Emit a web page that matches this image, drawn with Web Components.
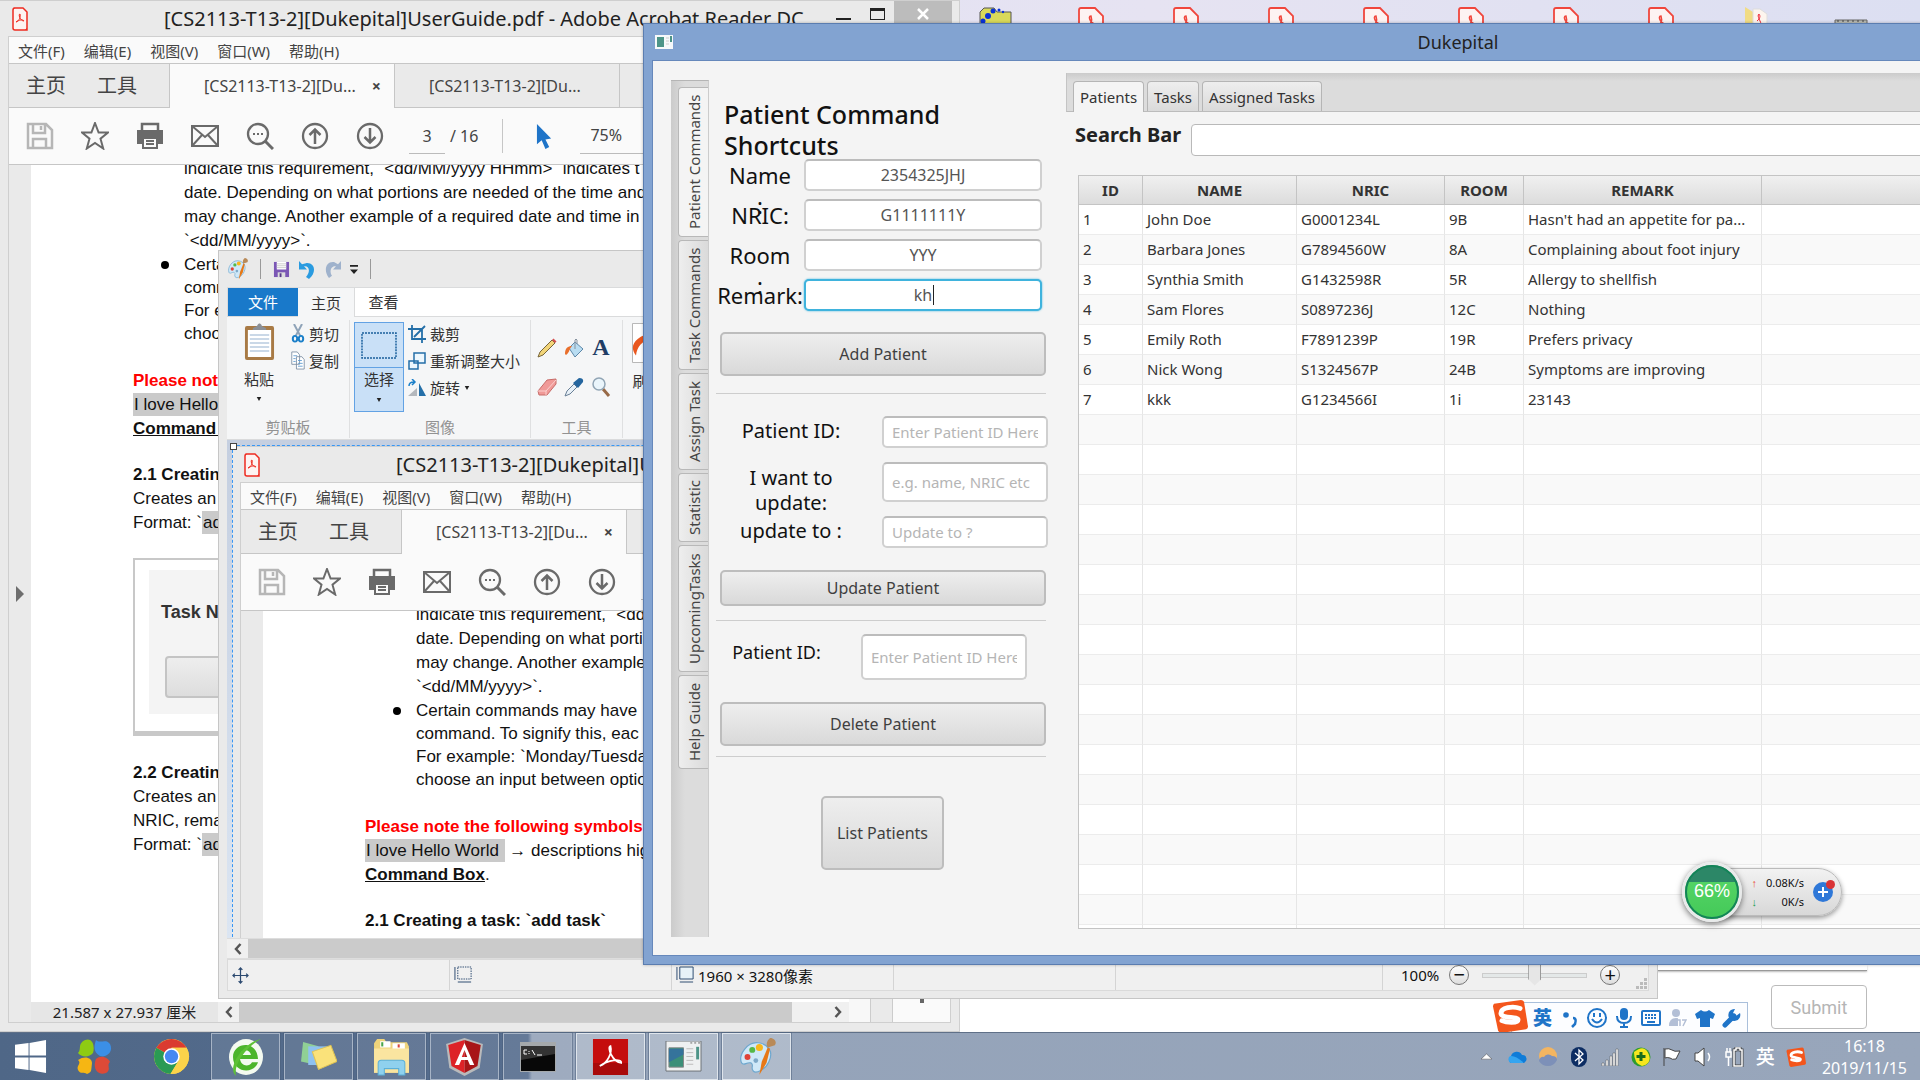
<!DOCTYPE html>
<html lang="zh-CN">
<head>
<meta charset="utf-8">
<title>Dukepital</title>
<style>
html,body{margin:0;height:100%;overflow:hidden}
body{font-family:"Noto Sans","Noto Sans CJK SC",sans-serif;color:#333}
</style>
</head>
<body>
<desk-top></desk-top>
<script>
const ICONS = {
pdf:['0 0 16 24','<path d="M1.500 1h9.500L15 5v18H3q-2 0-2-2V3q0-2 2-2M15 5v16q0 2-2 2H3" fill="#fdf3f2" stroke="#ee2b20" stroke-width="1.500"/><path d="M4 15c3-1 5-5 4-8-2 0 0 7 4 7-1-2-5-1-8 1" fill="none" stroke="#ee2b20"/>'],
save:['0 0 28 28','<path d="M2 2h18l6 6v18H2zM7 2v9h12V2M15 4v4M7 26v-9h13v9" fill="none" stroke="#b6b6b6" stroke-width="2.500"/>'],
star:['0 0 28 28','<path d="M14 1l3.600 9.500H27l-7.500 6.200 2.700 9.800L14 21l-8.200 5.500 2.700-9.800L1 10.500h9.400z" fill="none" stroke="#6a6a6a" stroke-width="2"/>'],
print:['0 0 28 28','<path d="M6 10V2h16v8" fill="none" stroke="#6a6a6a" stroke-width="2.500"/><path d="M1 8h26v14h-5v-6H6v6H1z" fill="#6a6a6a"/><path d="M7 16h14v10H7zM10 19h8M10 22h8" fill="none" stroke="#6a6a6a" stroke-width="2"/>'],
mail:['0 0 28 28','<path d="M1 4h26v20H1zM1 4l13 11L27 4M1 24l10-11M27 24L17 13" fill="none" stroke="#6a6a6a" stroke-width="2"/>'],
find:['0 0 28 28','<circle cx="12" cy="12" r="10" fill="none" stroke="#6a6a6a" stroke-width="2.300"/><path d="M19 19l8 8" stroke="#6a6a6a" stroke-width="3"/><path d="M7 11h2v2H7zm4 0h2v2h-2zm4 0h2v2h-2z" fill="#6a6a6a"/>'],
up:['0 0 28 28','<circle cx="14" cy="14" r="12" fill="none" stroke="#6a6a6a" stroke-width="2.300"/><path d="M14 22V8M8.500 13L14 7.500l5.500 5.500" fill="none" stroke="#6a6a6a" stroke-width="2.500"/>'],
down:['0 0 28 28','<circle cx="14" cy="14" r="12" fill="none" stroke="#6a6a6a" stroke-width="2.300"/><path d="M14 6v14M8.500 15l5.500 5.500 5.500-5.500" fill="none" stroke="#6a6a6a" stroke-width="2.500"/>'],
cursor:['0 0 18 28','<path d="M1 1v21l5-4 4 9 4-2-4-8 6-1z" fill="#1f74c8"/>'],
palette:['0 0 32 32','<path d="M17 4c9 1 13 8 9 16-3 7-11 10-13 8-3-3 1-5-2-7-4-1-6 3-8 0C0 14 8 3 17 4z" fill="#cfe8f8" stroke="#6fa8cf"/><circle cx="8" cy="16" r="2.500" fill="#df4238"/><circle cx="12" cy="10" r="2.500" fill="#55b848"/><circle cx="18" cy="8" r="3" fill="#f9b61c"/><circle cx="15" cy="19" r="2" fill="#7ea9c9"/><path d="M18 31l2-11 5-12 2 1-3 12z" fill="#e67817"/><path d="M25 8c-2-4 0-6 2-8 4 0 6 4 4 6z" fill="#b98a58"/>'],
floppy:['0 0 18 18','<path d="M1 1h16v16H1z" fill="#7b57b5"/><path d="M4 1h10v8H4z" fill="#fff"/><path d="M4 3h10M4 5h10M4 7h10" stroke="#ccc"/><path d="M5 12h8v5H5z" fill="#ddd"/><path d="M7 13h2v4H7z" fill="#553a86"/>'],
undo:['0 0 18 18','<path d="M1 1v8h8L6 6c5-1 7 5 2 10l3 2c8-6 6-16-3-15L4 4z" fill="#2a9be0"/>'],
redo:['0 0 18 18','<path d="M17 1v8H9l3-3C7 5 5 11 8 15l-3 2C-1 10 2 1 10 2l4 2z" fill="#9fb2cc"/>'],
caret:['0 0 8 4','<path d="M1 0h6L4 4z" fill="#222"/>'],
lt:['0 0 8 12','<path d="M6.500 1L2 6l4.500 5" fill="none" stroke="#555" stroke-width="2.500"/>'],
gt:['0 0 8 12','<path d="M1.500 1L6 6l-4.500 5" fill="none" stroke="#555" stroke-width="2.500"/>'],
close:['0 0 12 12','<path d="M1 1l10 10M11 1L1 11" fill="none" stroke="#fff" stroke-width="2.500"/>'],
more:['0 0 8 10','<path d="M0 0h8v2H0zM0 5h8L4 10z" fill="#222"/>'],
clip:['0 0 32 38','<rect x="1" y="3" width="30" height="34" rx="2" fill="#a87a45"/><path d="M4 7h24v27H4z" fill="#fff"/><path d="M6 12h20M6 16h20M6 20h20M6 24h20M6 28h20" stroke="#b9cbe0" stroke-width="1.500"/><path d="M9 7c0-4 4-2 5-5 1-2 3-2 4 0 1 3 5 1 5 5z" fill="#8a8f96"/>'],
cut:['0 0 14 20','<path d="M3 0l6 12M11 0L5 12" stroke="#8fa3b8" stroke-width="2"/><ellipse cx="4" cy="15.500" rx="2.200" ry="3" fill="none" stroke="#1b7fc9" stroke-width="2"/><ellipse cx="10" cy="15.500" rx="2.200" ry="3" fill="none" stroke="#1b7fc9" stroke-width="2"/>'],
copy:['0 0 18 20','<path d="M1 1h7l3 3v10H1zM7 6h7l3 3v10H7z" fill="#fff" stroke="#7d8ea3"/><path d="M3 5h5M3 8h3M3 11h3M9 10h5M9 13h6M9 16h6" stroke="#5d9ad0"/>'],
marquee:['0 0 36 28','<rect x="1" y="1" width="34" height="26" fill="none" stroke="#1a5f9c" stroke-width="1.500" stroke-dasharray="2 1"/>'],
crop:['0 0 18 18','<path d="M4 0v14h14M0 4h14v14M6 12L17 1" fill="none" stroke="#246fa8" stroke-width="1.800"/>'],
resize:['0 0 18 18','<path d="M1 9h9v8H1zM6 1h11v10H6z" fill="#edf7fd" stroke="#246fa8" stroke-width="1.500"/>'],
rotate:['0 0 18 18','<path d="M0 17h9V9z" fill="#b4b8bd"/><path d="M11 4v13h7z" fill="#246fa8"/><path d="M1 7c0-3 2-4 5-4M4 0l3 3-3 3" fill="none" stroke="#1b7fc9" stroke-width="1.500"/>'],
pencil:['0 0 20 20','<path d="M1 19l2-5L15 2l3 3L6 17z" fill="#f2d579" stroke="#77653a"/><path d="M15 2l3 3 1.500-1.500-3-3z" fill="#d45050"/>'],
bucket:['0 0 20 20','<path d="M5 10l6-6 8 7-8 8z" fill="#b9ddf2" stroke="#5d87a8"/><path d="M11 11V2q1-2 2 0v4" fill="none" stroke="#8793a0"/><path d="M1 16c0-6 3-8 7-8-3 3-2 6-6 9z" fill="#e96f2c"/>'],
eraser:['0 0 20 20','<path d="M1 14L10 3l9-1v5L10 18H2z" fill="#f09a98" stroke="#c76c69"/><path d="M1 14h8L19 3M9 14v4" fill="none" stroke="#fbd0ce"/>'],
picker:['0 0 20 20','<path d="M1 19l2-5 7-7 3 3-7 7z" fill="#e8f0f7" stroke="#687f96"/><path d="M9 6l5 5 5-6q1-4-4-4z" fill="#24659e"/>'],
glass:['0 0 20 20','<path d="M12 12l6 7" stroke="#986a47" stroke-width="3"/><circle cx="8" cy="7" r="6" fill="#eaf5fb" stroke="#91a5b5" stroke-width="1.500"/>'],
brush:['0 0 30 42','<path d="M.5.5h29v41H.5z" fill="#fff" stroke="#b5b5b5"/><path d="M20 10C4 14-4 24 4 34c1-9 6-16 16-17z" fill="#e9571f"/>'],
move:['0 0 18 18','<path d="M9 1v16M1 9h16M7 3l2-2 2 2M7 15l2 2 2-2M3 7L1 9l2 2M15 7l2 2-2 2" fill="none" stroke="#2c4a70" stroke-width="1.300"/>'],
selsize:['0 0 20 18','<path d="M4 1h14v12H4z" fill="none" stroke="#2c4a70" stroke-dasharray="1.500 1"/><path d="M1 1v13M4 16h14" stroke="#2c4a70"/>'],
imgsize:['0 0 20 18','<path d="M4 1h14v12H4z" fill="#e7f2f8" stroke="#2c4a70"/><path d="M1 1v13M4 16h14" stroke="#2c4a70"/>'],
win:['0 0 18 16','<path d="M0 1h18v14H0z" fill="#f6f8fa"/><path d="M2 3h7v10H2z" fill="#4d9488"/><path d="M15 2h2v6h-2z" fill="#4d9488"/><path d="M11 4h3M11 7h3M11 10h3" stroke="#ccc"/>'],
start:['0 0 34 34','<path d="M1 5l14-2v13H1zM16 3l17-3v16H16zM1 18h14v13L1 29zM16 18h17v16l-17-3z" fill="#fff"/>'],
four:['0 0 36 36','<path d="M9 1c8-3 10 7 8 13-4 5-12 4-15 0 4-4-1-9 7-13z" fill="#8ecb13"/><path d="M20 1c4 4 10-2 14 4 4 8-4 14-10 12-7-4-6-10-4-16z" fill="#3b8fe6"/><path d="M2 21c7-5 14-2 14 3-1 8 0 9-5 11-5-3-6 1-9-4-2-5 4-6 0-10z" fill="#f6b613"/><path d="M20 20c5-5 13-1 14 3-4 4 2 7-4 11-8 3-14-4-10-14z" fill="#dd4a37"/>'],
chrome:['0 0 36 36','<circle cx="18" cy="18" r="17" fill="#fbd34a"/><path d="M18 18L3.300 9.500A17 17 0 0 1 32.700 9.500H18z" fill="#da3b30"/><path d="M3.300 9.500A17 17 0 0 0 17 35l8-13-7-4z" fill="#2a9a54"/><path d="M18 9.500h14.700A17 17 0 0 1 17 35l8-13z" fill="#fbd34a"/><circle cx="18" cy="18" r="8" fill="#fff"/><circle cx="18" cy="18" r="6.500" fill="#4688f1"/>'],
e360:['0 0 36 36','<circle cx="18" cy="18" r="17" fill="#f4faf0"/><path d="M30 20H12c1 7 9 8 12 3h6C26 35 5 33 5 18 5 4 29 1 30 20zM12 16h11c-1-6-10-6-11 0z" fill="#4cb52b"/><path d="M8 36C-2 28 16 4 33 1 20 7 5 24 8 36z" fill="#5dc135"/>'],
notes:['0 0 36 36','<path d="M3 1l15 5-6 20-11-3z" fill="#90d095"/><path d="M8 6h18v21H8z" fill="#8fc2ef"/><path d="M12 12l18-7 6 18-18 9z" fill="#fae27a" stroke="#dfc353"/>'],
folder:['0 0 38 36','<path d="M2 5l3-4h7l2 3h20l2 4v25H2z" fill="#eed37b"/><path d="M8 3h10v6H8zM20 5h12v6H20z" fill="#fff"/><path d="M9 4h2v4H9z" fill="#4aa54a"/><path d="M25 6h2v3h-2z" fill="#d9453a"/><path d="M2 10h34v23H2z" fill="#fae5a0"/><path d="M6 24q0-3 3-3h20q3 0 3 3v11h-6v-6H12v6H6z" fill="#8fd1ee" stroke="#5bb0d9"/>'],
ang:['0 0 36 38','<path d="M18 0l17 6-3 24-14 8L4 30 1 6z" fill="#b9babb"/><path d="M18 2l15 5-3 21-12 7z" fill="#a81517"/><path d="M18 2L3 7l3 21 12 7z" fill="#dd2227"/><path d="M18 5l9 22h-4l-2-5h-6l-2 5H9zM18 12l-2.500 7h5z" fill="#fff" fill-rule="evenodd"/>'],
cmd:['0 0 36 30','<path d="M0 0h36v30H0z" fill="#a5a9ac"/><path d="M1 4h34v25H1z" fill="#080808"/><path d="M1 4h34v8L1 18z" fill="#333"/><path d="M7 8H4v4h3M9 9v1M9 11v1M12 8l3 5M17 13h5" stroke="#fff" fill="none"/>'],
reader:['0 0 38 36','<path d="M1 0h36v36H1z" fill="#c50d0d"/><path d="M1 24h36v12H1z" fill="#8e0808" opacity=".5"/><path d="M8 27c8-3 13-13 11-20-4 1 2 16 11 17 1-5-14-3-22 3" fill="none" stroke="#fff" stroke-width="1.700"/>'],
app:['0 0 38 32','<path d="M1 0h36v31H1z" fill="#eef0f1" stroke="#6c7277"/><path d="M4 7h15v20H4z" fill="#3b8f78" stroke="#888"/><path d="M4 8h15v6L4 22z" fill="#35739b"/><path d="M22 8h7M22 12h7M22 16h7M22 20h7M22 24h7" stroke="#bbb"/><path d="M32 6h3v13h-3z" fill="#4d9488"/><path d="M26 2h2m2 0h2m2 0h2" stroke="#666"/>'],
tri:['0 0 12 8','<path d="M0 7l6-6 6 6z" fill="#fff" stroke="#555" stroke-width=".6"/>'],
cloud:['0 0 20 14','<path d="M4 13a4 4 0 0 1 0-7 6 6 0 0 1 11-1 4 4 0 0 1 1 8z" fill="#0f7cd8"/><path d="M4 13a4 4 0 0 1-1-7q5-1 13 6v1z" fill="#35a5f0"/>'],
weather:['0 0 20 20','<circle cx="10" cy="9" r="9" fill="#f3b561"/><path d="M1 14a4 4 0 0 1 5-4 5 5 0 0 1 8-1q5 0 5 4-3 6-9 6-6 0-9-5z" fill="#7d90b8"/>'],
bt:['0 0 16 20','<rect width="16" height="20" rx="8" fill="#0d2d63"/><path d="M4 6l8 7-4 4V3l4 4-8 7" fill="none" stroke="#fff" stroke-width="1.300"/>'],
signal:['0 0 18 18','<path d="M1 15h2v3H1zM5 12h2v6H5zM9 8h2v10H9zM12 5h2v13h-2zM15 1h2v17h-2z" fill="#fff" stroke="#555" stroke-width=".5"/>'],
plus:['0 0 20 20','<circle cx="10" cy="10" r="9.500" fill="#2c9b2f"/><path d="M3 5Q14-4 18 8q3 9-7 11Q3 17 3 5z" fill="#f6e71e"/><path d="M10 5v9M5.500 9.500h9" stroke="#186c1c" stroke-width="3"/>'],
flag:['0 0 20 20','<path d="M2 1v18M3 2q4-1 7 1 2 2 8 1l-4 8q-4 1-6-1-3-1-5 0z" fill="#fff" stroke="#444"/>'],
speaker:['0 0 18 20','<path d="M1 6h3l6-5v18l-6-5H1z" fill="#fff" stroke="#444"/><path d="M14 6q3 4 0 8" fill="none" stroke="#fff" stroke-width="1.500"/>'],
power:['0 0 20 20','<path d="M10 3h2V1h4v2h2v16h-8z" fill="none" stroke="#444" stroke-width="3"/><path d="M10 3h2V1h4v2h2v16h-8zM3 1v4M6 1v4M2 5h5v5H2zM4.500 10v9" fill="none" stroke="#fff" stroke-width="1.500"/>'],
sogou:['0 0 36 36','<path d="M2 5L29 1q2 0 3 2l4 26q0 2-2 3L9 36q-2 0-3-3L1 8q0-2 1-3z" fill="#f4561c"/><path d="M28 10c-7-3-19-1-19 5 0 6 17 3 17 7 0 4-12 3-16 1" fill="none" stroke="#fff" stroke-width="5" stroke-linecap="round"/>'],
punct:['0 0 20 20','<circle cx="6" cy="7" r="2.800" fill="#1f74c8"/><path d="M13 10q4 0 2 6l-3 3" fill="none" stroke="#1f74c8" stroke-width="2.500"/>'],
smile:['0 0 20 20','<circle cx="10" cy="10" r="9" fill="none" stroke="#1f74c8" stroke-width="2"/><path d="M5 11q5 7 10 0M7 5v4M13 5v4" fill="none" stroke="#1f74c8" stroke-width="2"/>'],
mic:['0 0 20 20','<rect x="6" y="0" width="8" height="12" rx="4" fill="#1f74c8"/><path d="M3 8q0 7 7 7t7-7M10 15v4M6 19h8" fill="none" stroke="#1f74c8" stroke-width="2"/>'],
keyb:['0 0 20 20','<rect x="1" y="3" width="18" height="14" rx="1" fill="none" stroke="#1f74c8" stroke-width="2"/><path d="M4 7h12M4 10h12" stroke="#1f74c8" stroke-width="2" stroke-dasharray="2 1"/><path d="M6 14h8" stroke="#1f74c8" stroke-width="2"/>'],
person:['0 0 20 20','<circle cx="8" cy="5" r="4" fill="#b3bfd6"/><path d="M1 18q0-8 7-8 5 0 6 3v5z" fill="#b3bfd6"/><path d="M10 12h2v6M14 12h5l-3 6" fill="none" stroke="#fff" stroke-width="4"/><path d="M9 12h3v6M14 12h4l-3 6" fill="none" stroke="#b3bfd6" stroke-width="1.500"/>'],
shirt:['0 0 20 20','<path d="M6 2q4 3 8 0l6 4-2 5-3-1v9H5v-9l-3 1-2-5z" fill="#1f74c8"/>'],
wrench:['0 0 20 20','<path d="M3 17l9-9" stroke="#1f74c8" stroke-width="5" stroke-linecap="round"/><path d="M18 5a6 6 0 1 1-5-4l-2 4 3 3z" fill="#1f74c8"/>'],
dirs:['0 0 34 34','<path d="M1 5l4-4h10l3 4h14v29H1z" fill="#d9d95a" stroke="#555"/><circle cx="9" cy="9" r="3" fill="#0a32d8"/><circle cx="14" cy="4" r="2.500" fill="#0a32d8"/><circle cx="4" cy="14" r="2.500" fill="#0a32d8"/><circle cx="20" cy="3" r="1.500" fill="#0a32d8"/><circle cx="24" cy="5" r="1.200" fill="#0a32d8"/>'],
file:['0 0 26 32','<path d="M3 1h14l8 8v23H1V3q0-2 2-2z" fill="#fdf3f2" stroke="#f0463c" stroke-width="1.800"/><path d="M7 21c5-2 8-7 6-12-4 0 0 9 7 9-2-3-8 0-13 3" fill="none" stroke="#f0463c" stroke-width="1.500"/>'],
dirp:['0 0 24 24','<path d="M1 0l8 5v19H1z" fill="#f1dc85"/><path d="M9 2h7l7 5v17H9z" fill="#fdf5ee" stroke="#ddd"/><path d="M13 14c4-3 3-6 2-7-3 2 3 8 2 12" fill="none" stroke="#e23"/>'],
dev:['0 0 34 24','<path d="M1 13h32v11H1z" fill="#b9bbb4" stroke="#666"/><path d="M3 14h28" stroke="#444" stroke-dasharray="2 3"/>']
};

const define = (name, css, html, init) => {
  const t = document.createElement('template');
  t.innerHTML = `<style>*{box-sizing:border-box}button{font:inherit;color:inherit;background:none;border:0;margin:0;padding:0;text-align:center;white-space:nowrap}:host{display:block;box-sizing:border-box}${css}</style>${html}`;
  customElements.define(name, class extends HTMLElement {
    constructor() {
      super();
      this.attachShadow({mode: 'open'}).append(t.content.cloneNode(true));
    }
    connectedCallback() { if (init) init(this, this.shadowRoot); }
  });
};

// <ui-icon name w h>: one drawing out of ICONS
define('ui-icon', ':host{display:block;flex:none}svg{display:block}', '<svg aria-hidden="true"></svg>', (el, root) => {
  const [box, body] = ICONS[el.getAttribute('name')], s = root.querySelector('svg');
  s.setAttribute('viewBox', box);
  s.setAttribute('width', el.getAttribute('w') || 20);
  s.setAttribute('height', el.getAttribute('h') || el.getAttribute('w') || 20);
  s.setAttribute('preserveAspectRatio', 'none');
  s.innerHTML = body;
});
const ic = (n, w, h) => `<ui-icon name="${n}" w="${w || 20}" h="${h || w || 20}"></ui-icon>`;

// The page of the guide shown by the reader
define('guide-page', `
:host{background:#fff;flex:1;overflow:hidden;font:17px/24px "Liberation Sans",Arial,sans-serif;color:#111;white-space:nowrap;padding-left:102px}
p,ul,h3,figure{margin:0;padding:0;font-size:17px}
.lead{margin-top:-8px;padding-left:51px}
ul{padding-left:51px;line-height:23px;list-style:none}
li{display:flex;margin-left:-23px}
li::before{content:"";width:8px;height:8px;border-radius:4px;background:#000;margin:8px 15px 0 0}
.note{margin-top:24px}.note b{color:red}.note u{font-weight:bold;color:#111}
mark{background:#cacaca;color:#111;padding:2px 1px}
.h{margin-top:22px}
figure{margin-top:23px;width:600px;height:178px;border:2px solid #c8c8c8;border-bottom-width:5px;padding:10px 14px}
.card{background:#f4f4f4;height:144px;padding:30px 12px;display:flex;flex-direction:column;gap:32px}
.card b{font-size:18px;color:#333}
.card i{height:42px;flex:none;border:2px solid #c4c4c4;border-radius:4px;background:linear-gradient(#eee,#ddd);margin-left:4px}
.s{margin-top:25px}
:host([brief]) .rest{display:none}`, `
<p class="lead">indicate this requirement, \`&lt;dd/MM/yyyy HHmm&gt;\` indicates t<br>date. Depending on what portions are needed of the time and<br>may change. Another example of a required date and time in<br>\`&lt;dd/MM/yyyy&gt;\`.</p>
<ul><li><span>Certain commands may have<br>command. To signify this, eac<br>For example: \`Monday/Tuesda<br>choose an input between optio</span></li></ul>
<p class="note"><b>Please note the following symbols</b><br><mark>I love Hello World&nbsp;</mark> → descriptions hig<br><u>Command Box</u>.</p>
<h3 class="h">2.1 Creating a task: \`add task\`</h3>
<div class="rest"><p>Creates an<br>Format: \`<mark>ad</mark></p>
<figure><div class="card"><b>Task N</b><i></i></div></figure>
<h3 class="s">2.2 Creatin</h3>
<p>Creates an<br>NRIC, rema<br>Format: \`<mark>ad</mark></p></div>`);

// Reader window; with "brief" its page stops at the first heading
define('pdf-reader', `
:host{display:flex;flex-direction:column;background:#eaeaea;color:#444}
header{height:35px;display:flex;align-items:center;padding-left:12px;color:#222;font-size:20px;white-space:nowrap;flex:none}
header span{margin-left:136px}
.wb{margin-left:auto;display:flex;align-self:flex-start;color:#222;margin-right:7px}
.wb button{height:30px;width:34px;display:flex;justify-content:center;padding-top:7px}
.wb i{width:15px;height:12px;border:1px solid #222;border-top-width:3px}
.wb i.m{border:0;border-bottom:2px solid #222}
.wb .x{width:58px;background:#bcbcbc}
.in{flex:1;display:flex;flex-direction:column;margin:0 8px;border:1px solid #cfcfcf;min-height:0}
nav{display:flex;gap:19px;height:26px;background:#fafafa;padding-left:9px;font-size:15px;align-items:center;flex:none}
.tabs{height:45px;display:flex;border-bottom:1px solid #c6c6c6;border-top:1px solid #c6c6c6;flex:none}
.tabs .a{width:161px;display:flex;gap:31px;padding:0 0 3px 17px;font-size:20px;border-right:1px solid #c6c6c6}
.tabs .t{width:225px;padding-left:34px;font-size:16px;border-right:1px solid #c6c6c6;display:flex;align-items:center;gap:16px;white-space:nowrap}
.tabs .on{background:#fafafa;height:44px}
.bar{height:57px;display:flex;background:#fafafa;border-bottom:1px solid #c6c6c6;align-items:center;padding-left:3px;font-size:16px;flex:none}
.bar .b{width:55px;display:flex;justify-content:center}
.bar input{width:36px;height:36px;border:0;border-bottom:1px solid #bbb;background:none;text-align:center;font:16px "Noto Sans",sans-serif;color:#444;margin-left:12px;padding:0}
.bar .d{width:1px;height:34px;background:#c6c6c6;margin:0 33px 0 24px}
.bar .z{margin-left:27px;border-bottom:1px solid #bbb;height:36px;line-height:34px;padding:0 60px 0 10px}
.bar .n{margin-left:5px}
.doc{flex:1;display:flex;min-height:0}
.g{width:22px;display:flex;align-items:center;padding-left:7px}
.g i{border:8px solid transparent;border-left:8px solid #6d6d6d;border-right:0}
.c{flex:1;display:flex;flex-direction:column;min-width:0}
.st{height:20px;display:flex;background:#f0f0f0;color:#222;font-size:15px;line-height:20px;flex:none;align-items:center}
.st .q{width:187px;text-align:center;background:#e6e6e6}
.st .k{width:21px;display:flex;justify-content:center}
.st .th{flex:1;background:#cbcbcb;height:20px}.st .r{width:57px;padding-left:42px}
.v{width:21px;background:#f8f8f8}.w{width:23px;border:1px solid #ccc;border-width:0 1px}.p{width:57px;background:#fafafa;display:flex;flex-direction:column;justify-content:flex-end;align-items:center;padding-bottom:19px}
.p i{width:4px;height:10px;background:#666}
footer{height:8px;flex:none}`, `
<header>${ic('pdf',16,24)}<span>[CS2113-T13-2][Dukepital]UserGuide.pdf - Adobe Acrobat Reader DC</span><div class="wb"><button aria-label="Minimise"><i class="m"></i></button><button aria-label="Maximise"><i></i></button><button class="x" aria-label="Close">${ic('close',12)}</button></div></header>
<div class="in">
<nav><button>文件(F)</button><button>编辑(E)</button><button>视图(V)</button><button>窗口(W)</button><button>帮助(H)</button></nav>
<div class="tabs"><div class="a"><button>主页</button><button>工具</button></div><div class="t on"><span>[CS2113-T13-2][Du...</span><b>×</b></div><div class="t">[CS2113-T13-2][Du...</div></div>
<div class="bar">${['save','star','print','mail','find','up','down'].map(n=>`<button class="b" aria-label="${n}">${ic(n,28)}</button>`).join('')}<input aria-label="Page" value="3"><span class="n">/ 16</span><span class="d"></span>${ic('cursor',17,27)}<span class="z">75%</span></div>
<div class="doc"><div class="g"><i></i></div><div class="c"><guide-page></guide-page><div class="st"><span class="q">21.587 x 27.937 厘米</span><span class="k">${ic('lt',8,12)}</span><span class="th"></span><span class="r">${ic('gt',8,12)}</span></div></div><div class="v"></div><div class="w"></div><div class="p"><i></i></div></div>
</div><footer></footer>`, (el, root) => {
  if (el.hasAttribute('brief')) root.querySelector('guide-page').setAttribute('brief', '');
});

// Paint window
define('paint-window', `
:host{display:flex;flex-direction:column;background:#eaeaea;border:1px solid #c6c6c6;padding:0 8px 7px;color:#333;font-size:15px}
.q{height:36px;display:flex;align-items:center;gap:8px;flex:none}
.q i{width:1px;height:20px;background:#999;margin:0 4px}
.tabs{display:flex;height:30px;background:#fff;border:1px solid #dadbdc;flex:none}
.tabs button{width:57px;padding-bottom:2px}.tabs .f{width:70px;height:28px;background:#1979ca;color:#fff}.tabs .h{background:#f5f6f7;height:30px;border-right:1px solid #dadbdc}
.rb{height:123px;display:flex;background:#f5f6f7;border-bottom:1px solid #dadbdc;padding:3px 0 1px;flex:none;white-space:nowrap}
.g{border-right:1px solid #dfe0e1;display:flex;flex-direction:column;justify-content:space-between;align-items:center}
.g>small{font-size:15px;line-height:22px;color:#929292}
.r{display:flex;height:92px;align-self:stretch}
.big{display:flex;flex-direction:column;align-items:center;line-height:24px;gap:6px}
.big ui-icon:first-child{margin-top:3px}
.col{display:flex;flex-direction:column}
.col button{display:flex;gap:4px;align-items:center;height:27px}
.sel{width:50px;height:90px;background:#c9e0f7;border:1px solid #62a2e4;display:flex;flex-direction:column;align-items:center;margin:2px 4px 0}
.sel div{height:45px;width:100%;border-bottom:1px solid #62a2e4;display:flex;justify-content:center;align-items:center}
.sel span{line-height:22px;margin-bottom:8px}
.tools{display:grid;grid-template-columns:27px 27px 27px;grid-auto-rows:39px;padding:8px 5px 0 0;place-items:center}
.tools b{font:bold 24px "Liberation Serif",serif;color:#1f3d66}
.cv{flex:1;min-height:0;background:linear-gradient(#c5cfe0,#dbe5f2);padding:6px 0 0 5px;overflow:hidden;position:relative}
pdf-reader{height:1032px;width:1500px;border-top:1px solid #cfcfcf}
.ants{position:absolute;inset:5px -4px -4px 5px;border:1px dashed #3797f5}
.ants::before{content:"";position:absolute;left:-3px;top:-3px;width:5px;height:5px;border:1px solid #444;background:#fff}
.hs{height:21px;display:flex;background:#f0f0f0;border:1px solid #ddd;border-width:1px 0;flex:none;align-items:center}
.hs span{width:21px;display:flex;justify-content:center}.hs i{flex:1;background:#cbcbcb;height:19px}
.st{height:32px;background:#f0f0f0;display:flex;flex:none;border:1px solid #dadada;color:#111}
.st>div{width:222px;border-right:1px solid #d4d4d4;display:flex;align-items:center;padding-left:4px;gap:3px;white-space:nowrap}
.st>div:nth-child(5){width:267px}.st>div:last-child{flex:1;border:0;padding-left:18px;gap:10px}
.o{width:20px;height:20px;flex:none;border:1px solid #777;border-radius:10px;line-height:16px;font-size:20px;background:linear-gradient(#fff,#ddd)}
input{appearance:none;width:105px;height:26px;margin:0 3px;background:none}
input::-webkit-slider-runnable-track{height:5px;border:1px solid #ccc;background:#e4e8e8}
input::-webkit-slider-thumb{appearance:none;width:13px;height:21px;margin-top:-9px;clip-path:polygon(0 0,100% 0,100% 70%,50% 100%,0 70%);background:linear-gradient(90deg,#999 1px,#e6e6e6 1px 12px,#999 12px)}
.gr{margin-left:auto;align-self:flex-end;width:12px;height:12px;background:conic-gradient(#bbb 0 0) 8px 0/3px 3px no-repeat,conic-gradient(#bbb 0 0) 4px 4px/3px 3px no-repeat,conic-gradient(#bbb 0 0) 8px 4px/3px 3px no-repeat,conic-gradient(#bbb 0 0) 0 8px/3px 3px no-repeat,conic-gradient(#bbb 0 0) 4px 8px/3px 3px no-repeat,conic-gradient(#bbb 0 0) 8px 8px/3px 3px no-repeat}`, `
<div class="q">${ic('palette',21,22)}<i></i>${ic('floppy',17)}${ic('undo',18,19)}${ic('redo',18,19)}${ic('more',8,9)}<i></i></div>
<div class="tabs"><button class="f">文件</button><button class="h">主页</button><button>查看</button></div>
<div class="rb">
<div class="g" style="width:123px"><div class="r"><button class="big" style="width:64px">${ic('clip',31,38)}<span>粘贴</span>${ic('caret',6,4)}</button><div class="col"><button>${ic('cut',14,19)}剪切</button><button>${ic('copy',14,19)}复制</button></div></div><small>剪贴板</small></div>
<div class="g" style="width:181px"><div class="r"><button class="sel"><div>${ic('marquee',36,27)}</div><span>选择</span>${ic('caret',6,4)}</button><div class="col"><button>${ic('crop',18)}裁剪</button><button>${ic('resize',18)}重新调整大小</button><button>${ic('rotate',18)}旋转 ${ic('caret',6,4)}</button></div></div><small>图像</small></div>
<div class="g" style="width:92px"><div class="tools">${ic('pencil')}${ic('bucket')}<b>A</b>${ic('eraser')}${ic('picker')}${ic('glass')}</div><small>工具</small></div>
<div class="g" style="width:50px"><button class="big">${ic('brush',30,40)}<span>刷子</span></button></div>
</div>
<div class="cv"><pdf-reader brief></pdf-reader><div class="ants"></div></div>
<div class="hs"><span>${ic('lt',8,12)}</span><i></i></div>
<div class="st"><div>${ic('move',17)}</div><div>${ic('selsize',19,18)}</div><div>${ic('imgsize',19,18)}<span>1960 × 3280像素</span></div><div></div><div></div><div><label for="z">100%</label><button class="o">−</button><input id="z" type="range"><button class="o">+</button><span class="gr"></span></div></div>`);

// Label and text box
define('fx-field', `
:host{display:flex;align-items:flex-start;height:var(--row,40px)}
label{width:var(--lw,88px);text-align:center;font-size:var(--fs,22px);line-height:var(--lh,30px);padding:var(--lp,5px) var(--lr,0) 0 0;color:#111;white-space:nowrap;flex:none}
.b{height:var(--row,40px);display:flex;align-items:center;width:var(--iw,238px);flex:none;position:relative}
input{width:100%;height:var(--h,32px);font:var(--ifs,16px) "Noto Sans",sans-serif;text-align:var(--ta,center);color:#555;border:2px solid #d0d0d0;border-top-color:#bcbcbc;border-radius:5px;background:#fff;padding:0 8px;outline:0;margin:0}
input::placeholder{color:#b5b5b5;opacity:1}
:host([focused]) input{border-color:#3fb3dd;box-shadow:0 0 2px #3fb3dd}
:host([focused]) .b::after{content:"";position:absolute;left:calc(50% + 10px);height:20px;width:1px;background:#222}`, `<label for="f"><slot></slot></label><div class="b"><input id="f"></div>`, (el, root) => {
  const i = root.querySelector('input');
  i.value = el.getAttribute('value') || '';
  i.placeholder = el.getAttribute('placeholder') || '';
});

define('fx-button', `button{width:100%;height:100%;border:2px solid #bdbdbd;border-radius:5px;background:linear-gradient(#eee,#d9d9d9);color:#3f3f3f;font-size:16px;line-height:22px}`, '<button><slot></slot></button>');

define('patient-form', `
:host{display:flex;flex-direction:column;width:357px;padding:38px 0 0 7px;flex:none}
h2{margin:0 0 -6px 8px;font:500 25px/31px "Noto Sans",sans-serif;color:#111;width:260px}
fx-button{height:44px;width:326px;margin:17px 0 0 4px}
hr{width:330px;height:1px;border:0;background:#cdcdcd;margin:17px 0 13px}
.two{--row:50px;--lw:166px;--lr:16px;--fs:20px;--lh:25px;--lp:11px;--iw:166px;--ta:left;--ifs:15px}
.two.tall{--h:40px;--lp:8px}
fx-button.u{height:36px;margin-top:13px}
.three{--row:46px;--lw:145px;--lr:24px;--fs:18px;--lh:25px;--lp:6px;--iw:166px;--ta:left;--h:46px;--ifs:15px}
.three+fx-button{margin-top:22px}
hr.n{margin-top:14px}
fx-button.l{width:123px;height:74px;margin:26px 0 0 105px}`, `
<h2>Patient Command Shortcuts</h2>
<fx-field value="2354325JHJ">Name<br>:</fx-field><fx-field value="G1111111Y">NRIC:</fx-field><fx-field value="YYY">Room<br>:</fx-field><fx-field focused value="kh">Remark:</fx-field>
<fx-button>Add Patient</fx-button><hr>
<fx-field class="two" placeholder="Enter Patient ID Here">Patient ID:</fx-field><fx-field class="two tall" placeholder="e.g. name, NRIC etc">I want to<br>update:</fx-field><fx-field class="two" placeholder="Update to ?">update to :</fx-field>
<fx-button class="u">Update Patient</fx-button><hr class="n">
<fx-field class="three" placeholder="Enter Patient ID Here">Patient ID:</fx-field>
<fx-button>Delete Patient</fx-button><hr class="n" style="margin-top:10px">
<fx-button class="l">List Patients</fx-button>`);

define('side-tabs', `
:host{width:38px;margin:19px 0 18px 18px;background:linear-gradient(90deg,#cbcbcb,#dcdcdc 14px);border-top:1px solid #b5b5b5;padding:6px 0 0 7px;display:flex;flex-direction:column;gap:3px;flex:none;border-right:1px solid #ccc}
button{writing-mode:vertical-rl;transform:rotate(180deg);width:30px;flex:none;font-size:15px;color:#444;border:1px solid #b8b8b8;border-left:0;border-radius:0 4px 4px 0;background:linear-gradient(90deg,#dadada,#eee);line-height:28px}
button:first-of-type{background:#f4f4f4}`, '', (el, root) => {
  [['Patient Commands',150],['Task Commands',130],['Assign Task',97],['Statistic',69],['UpcomingTasks',127],['Help Guide',94]].forEach(([t, h]) => {
    const b = document.createElement('button');
    b.textContent = t; b.style.height = h + 'px'; root.append(b);
  });
});

define('patient-table', `
:host{flex:1;min-height:0;overflow:hidden;border:1px solid #c4c4c4;border-right:0;background:#fff}
table{border-collapse:separate;border-spacing:0;table-layout:fixed;width:100%;font-size:15px;color:#333}
th{height:29px;background:linear-gradient(#f0f0f0,#dcdcdc);border-right:1px solid #c4c4c4;border-bottom:1px solid #c4c4c4;padding:0;line-height:22px}
td{height:30px;border-right:1px solid #e6e6e6;border-bottom:1px solid #ececec;padding:0 4px 2px;white-space:nowrap;line-height:22px}
tr:nth-child(even) td{background:#f9f9f9}`, `<table><colgroup><col style="width:64px"><col style="width:154px"><col style="width:148px"><col style="width:79px"><col style="width:238px"><col></colgroup><thead><tr><th>ID</th><th>NAME</th><th>NRIC</th><th>ROOM</th><th>REMARK</th><th></th></tr></thead><tbody></tbody></table>`, (el, root) => {
  const rows = [['1','John Doe','G0001234L','9B',"Hasn't had an appetite for pa..."],['2','Barbara Jones','G7894560W','8A','Complaining about foot injury'],['3','Synthia Smith','G1432598R','5R','Allergy to shellfish'],['4','Sam Flores','S0897236J','12C','Nothing'],['5','Emily Roth','F7891239P','19R','Prefers privacy'],['6','Nick Wong','S1324567P','24B','Symptoms are improving'],['7','kkk','G1234566I','1i','23143']];
  while (rows.length < 25) rows.push(['','','','','']);
  root.querySelector('tbody').innerHTML = rows.map(r => `<tr>${[...r, ''].map(c => `<td>${c}</td>`).join('')}</tr>`).join('');
});

define('records-pane', `
:host{flex:1;display:flex;flex-direction:column;min-width:0;padding:12px 0 26px}
nav{height:39px;background:linear-gradient(#cbcbcb,#dcdcdc 8px);border-bottom:1px solid #bcbcbc;border-left:1px solid #c4c4c4;padding:8px 0 0 6px;display:flex;gap:3px;font-size:15px;flex:none}
nav button{height:30px;padding:0 6px;border:1px solid #b5b5b5;border-bottom:0;border-radius:4px 4px 0 0;background:linear-gradient(#eee,#dadada)}
nav .on{background:#f4f4f4;height:31px}
.s{display:flex;padding:12px 0 19px 9px;gap:9px;line-height:22px;flex:none}
label{font-weight:bold;font-size:20px;color:#222;width:107px;white-space:nowrap}
input{flex:1;height:32px;border:1px solid #b9b9b9;border-radius:4px;background:#fff;padding:0 8px;margin:0;font:15px "Noto Sans",sans-serif}
patient-table{margin-left:12px}`, `
<nav><button class="on">Patients</button><button>Tasks</button><button>Assigned Tasks</button></nav>
<div class="s"><label for="q">Search Bar</label><input id="q"></div>
<patient-table></patient-table>`);

define('app-window', `
:host{display:flex;flex-direction:column;background:#82a3d1;border:1px solid #5b7db0;padding:0 8px 8px;box-shadow:0 0 3px #0004}
header{height:36px;display:flex;align-items:center;justify-content:center;font-size:18px;line-height:32px;color:#222;flex:none;padding-bottom:1px}
header ui-icon{margin-left:3px;margin-right:auto}header span{margin-right:auto;padding-right:21px}
main{flex:1;display:flex;background:#f4f4f4;border:1px solid #6688bb;border-width:1px 0 1px 1px;min-height:0}`, `
<header>${ic('win',18,16)}<span>Dukepital</span></header>
<main><side-tabs></side-tabs><patient-form></patient-form><records-pane></records-pane></main>`);

define('speed-ball', `
:host{display:flex;align-items:center}
.b{width:60px;height:60px;border-radius:30px;border:3px solid #e8eaea;box-shadow:0 2px 6px #0008;background:linear-gradient(#2c8767 32%,#52d364 32%,#44c958);display:flex;align-items:center;justify-content:center;color:#fff;font:18px "Liberation Sans",sans-serif;z-index:1;flex:none}
.b span{border:2px solid #138458;border-radius:30px;width:54px;height:54px;line-height:48px;text-align:center;flex:none}
.p{height:48px;flex:1;margin-left:-28px;padding:0 8px 0 34px;border:1px solid #bbb;border-radius:0 24px 24px 0;background:linear-gradient(#f2f2f2,#d8d8d8);box-shadow:0 2px 5px #0006;display:flex;align-items:center;justify-content:space-between}
.n{font:11px/19px "Noto Sans",sans-serif;color:#111;display:grid;grid-template-columns:8px 47px;text-align:right}
.r{color:#e8503a}.g{color:#24a052}
.c{width:20px;height:20px;border-radius:10px;background:#2f78d8;position:relative;flex:none}
.c::before{content:"";position:absolute;inset:5px;background:linear-gradient(#fff 0 0) 50%/2px 100% no-repeat,linear-gradient(#fff 0 0) 50%/100% 2px no-repeat}
.c::after{content:"";position:absolute;right:-2px;top:-2px;width:9px;height:9px;border-radius:5px;background:#d93336}`, `
<div class="b"><span>66%</span></div><div class="p"><div class="n"><b class="r">↑</b><span>0.08K/s</span><b class="g">↓</b><span>0K/s</span></div><span class="c"></span></div>`);

define('ime-bar', `
:host{display:flex;align-items:center;background:#fcfdff;border:1px solid #a9bfdb}
ui-icon:first-of-type{margin:-4px 1px 0 -20px}
span{width:27px;display:flex;justify-content:center}
b{font-size:19px;line-height:26px;color:#1f74c8;font-weight:900}`, `${ic('sogou',36,34)}<span><b>英</b></span>${['punct','smile','mic','keyb','person','shirt','wrench'].map(n=>`<span>${ic(n)}</span>`).join('')}`.replace(/<span><ui-icon/g,'<span><ui-icon style="margin:0"'));

define('task-bar', `
:host{display:flex;align-items:center;background:linear-gradient(90deg,#4f6787,#566d8e 528px,#94a3b9 532px,#98a6bb)}
.l{display:flex;align-items:center;height:100%;gap:4px}
.f{display:flex;height:48px;align-items:center;justify-content:center;width:60px}
.f.n{width:79px;padding-left:8px}
.t{width:69px;height:47px;border:1px solid #a7b4c6;background:#ffffff18;display:flex;align-items:center;justify-content:center;box-shadow:0 0 0 1px #4a5d7a80}
.on{background:#ffffff40;border-color:#dfe5ec}
.r{margin-left:auto;display:flex;align-items:center;padding-right:13px;color:#fff;white-space:nowrap}
.r span{width:31px;display:flex;justify-content:center}
.r b{font-size:19px;line-height:22px;font-weight:500}
.r time{font-size:16px;line-height:22px;text-align:center;margin-left:10px}`, `
<div class="l"><button class="f" aria-label="Start">${ic('start',33)}</button><button class="f">${ic('four',36)}</button><button class="f n">${ic('chrome',37)}</button>
${[['e360',36,38],['notes',37,32],['folder',39,38],['ang',39,38],['cmd',36,30],['reader',37,36],['app',37,31],['palette',38,38]].map(([n,w,h],i)=>`<button class="t ${i>4?'on':''}" aria-label="${n}">${ic(n,w,h)}</button>`).join('')}</div>
<div class="r">${[ic('tri',11,7),ic('cloud',20,14),ic('weather'),ic('bt',16,20),ic('signal',18),ic('plus'),ic('flag'),ic('speaker',18,20),ic('power'),'<b>英</b>',ic('sogou',20)].map(x=>`<span>${x}</span>`).join('')}<time>16:18<br>2019/11/15</time></div>`);

define('web-page', `
:host{background:#fff;display:flex;flex-direction:column;align-items:flex-end;padding-right:53px}
.c{width:210px;height:6px;border-bottom:1px solid #999;box-shadow:0 1px 2px #0004;flex:none}
button{margin-top:14px;width:96px;height:44px;border:1px solid #bbb;border-radius:4px;color:#b5b5b5;font:18px Roboto,sans-serif}`, '<div class="c"></div><button>Submit</button>');

// Desktop: windows lie freely over it
define('desk-top', `
:host{position:relative;height:100vh;overflow:hidden;background:linear-gradient(90deg,#dfe1f4,#e6e3f2 60%,#dcdff2)}
:host>*{position:absolute}
.ics{left:979px;top:7px;display:flex;gap:61px}
.ics>*{width:34px;display:flex;justify-content:center}
.a{left:0;top:0;bottom:48px;width:960px;border:1px solid #cfcfcf;border-left:0}
web-page{left:959px;right:0;bottom:48px;height:67px}
paint-window{left:218px;top:250px;width:1440px;height:749px}
app-window{left:643px;right:-353px;top:23px;height:942px}
speed-ball{right:78px;bottom:158px;width:160px}
ime-bar{right:172px;bottom:47px;width:237px;height:31px}
task-bar{left:0;right:0;bottom:0;height:48px;border-top:1px solid #5f7088}
@media all{.ics{position:absolute}pdf-reader,web-page,paint-window,app-window,speed-ball,ime-bar,task-bar{position:absolute}}`, `
<div class="ics"><span>${ic('dirs',34)}</span>${`<span>${ic('file',26,32)}</span>`.repeat(7)}<span>${ic('dirp',24)}</span><span>${ic('dev',34,24)}</span></div>
<web-page></web-page><pdf-reader class="a"></pdf-reader><paint-window></paint-window><app-window></app-window><speed-ball></speed-ball><ime-bar></ime-bar><task-bar></task-bar>`);
</script>
</body>
</html>
